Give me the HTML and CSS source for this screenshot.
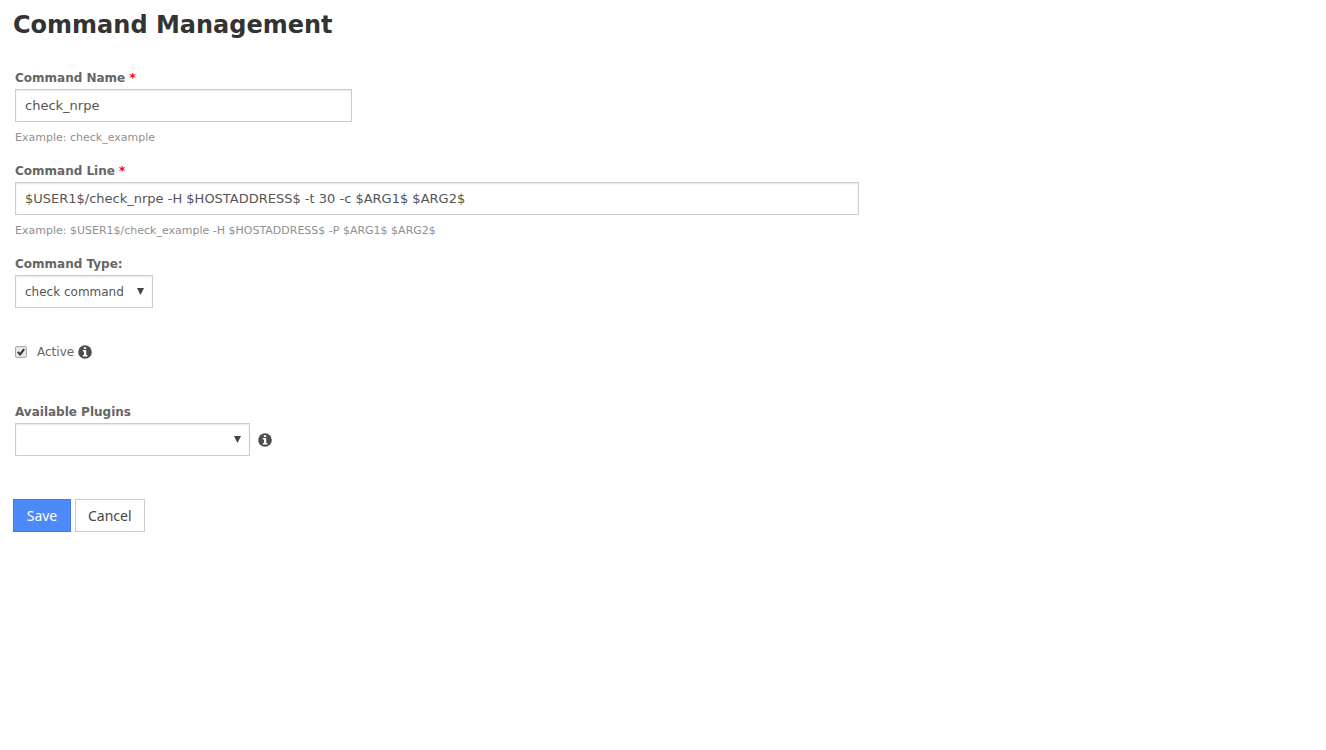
FILE: index.html
```html
<!DOCTYPE html>
<html lang="en">
<head>
<meta charset="utf-8">
<title>Command Management</title>
<link rel="stylesheet" href="styles.css">
</head>
<body>
<main class="page">
  <h1 class="title">Command Management</h1>
  <form class="form">
    <div class="fields">
      <div class="field">
        <label class="label" for="name">Command Name <span class="required">*</span></label>
        <input class="control text control-name" id="name" type="text" value="check_nrpe">
        <p class="hint">Example: check_example</p>
      </div>
      <div class="field">
        <label class="label" for="line">Command Line <span class="required">*</span></label>
        <input class="control text control-line" id="line" type="text" value="$USER1$/check_nrpe -H $HOSTADDRESS$ -t 30 -c $ARG1$ $ARG2$">
        <p class="hint">Example: $USER1$/check_example -H $HOSTADDRESS$ -P $ARG1$ $ARG2$</p>
      </div>
      <div class="field">
        <label class="label" for="type">Command Type:</label>
        <select class="control select control-type" id="type"><option>check command</option></select>
      </div>
      <div class="active">
        <input class="check" id="active" type="checkbox" checked>
        <label class="check-label" for="active">Active</label>
        <svg class="info" viewBox="0 0 14 14" aria-hidden="true"><circle cx="7" cy="7" r="6.8" fill="#4d4d4d"/><path fill="#fff" d="M5.8 2.2h2.4v1.9H5.8zM4.8 5.1h3.4v4.8h1.2v1.5H4.8V9.9H6V6.6H4.8z"/></svg>
      </div>
      <div class="field">
        <label class="label" for="plugins">Available Plugins</label>
        <div class="row">
          <select class="control select control-plugins" id="plugins"><option></option></select>
          <svg class="info" viewBox="0 0 14 14" aria-hidden="true"><circle cx="7" cy="7" r="6.8" fill="#4d4d4d"/><path fill="#fff" d="M5.8 2.2h2.4v1.9H5.8zM4.8 5.1h3.4v4.8h1.2v1.5H4.8V9.9H6V6.6H4.8z"/></svg>
        </div>
      </div>
    </div>
    <div class="buttons">
      <button class="button primary" type="submit">Save</button>
      <button class="button" type="button">Cancel</button>
    </div>
  </form>
</main>
</body>
</html>
```
FILE: styles.css
```css
* { box-sizing: border-box; }

body {
  margin: 0;
  background: #fff;
  color: #666;
  font-family: Verdana, "DejaVu Sans", sans-serif;
  font-size: 12px;
}

.page { padding: 9px 13px; }

.title {
  margin: 0 0 28px;
  color: #333;
  font-size: 24px;
  line-height: 32px;
}

.fields { padding: 0 2px; }

.field {
  display: flex;
  flex-direction: column;
  align-items: flex-start;
}

.label {
  font-weight: bold;
  line-height: 18px;
  padding-bottom: 2px;
}

.required { color: #f00; }

.control {
  width: 100%;
  height: 33px;
  padding: 0 9px;
  border: 1px solid #ccc;
  border-radius: 0;
  background-color: #fff;
  box-shadow: inset 0 1px 2px rgba(0, 0, 0, 0.1);
  color: #555;
  font: inherit;
}

.text { font-size: 13px; }

.control-name { max-width: 337px; }
.control-line { max-width: 844px; }
.control-type { max-width: 138px; }
.control-plugins { max-width: 235px; }

.select {
  appearance: none;
  background-image: url("data:image/svg+xml,%3Csvg xmlns='http://www.w3.org/2000/svg' viewBox='0 0 7 7'%3E%3Cpath d='M0 0h7L3.5 7z' fill='%23444'/%3E%3C/svg%3E");
  background-repeat: no-repeat;
  background-position: right 8px center;
  background-size: 7px 7px;
}

.hint {
  margin: 8px 0 16px;
  color: #909090;
  font-size: 11px;
  line-height: 16px;
}

.active {
  display: flex;
  align-items: center;
  gap: 4px;
  margin: 35px 0 42px;
  line-height: 18px;
}

.check {
  appearance: none;
  width: 12px;
  height: 12px;
  margin: 0 6px 0 0;
  border: 1px solid #aaa;
  border-radius: 2px;
  background: url("data:image/svg+xml,%3Csvg xmlns='http://www.w3.org/2000/svg' viewBox='0 0 11 11'%3E%3Cpath d='M2 5.4l2.5 2.8L9 2.3' fill='none' stroke='%23333' stroke-width='2.2'/%3E%3C/svg%3E") #e6e6e6;
}

.info {
  flex: none;
  width: 14px;
  height: 14px;
}

.row {
  display: flex;
  align-items: center;
  gap: 8px;
  width: 100%;
}

.buttons {
  display: flex;
  gap: 4px;
  margin-top: 43px;
}

.button {
  min-width: 58px;
  height: 33px;
  padding: 0 12px;
  border: 1px solid #ccc;
  background: #fff;
  color: #444;
  font-family: "Noto Sans", sans-serif;
  font-size: 14px;
}

.primary {
  border-color: #3f7be0;
  background: #4d89f9;
  color: #fff;
}
```
